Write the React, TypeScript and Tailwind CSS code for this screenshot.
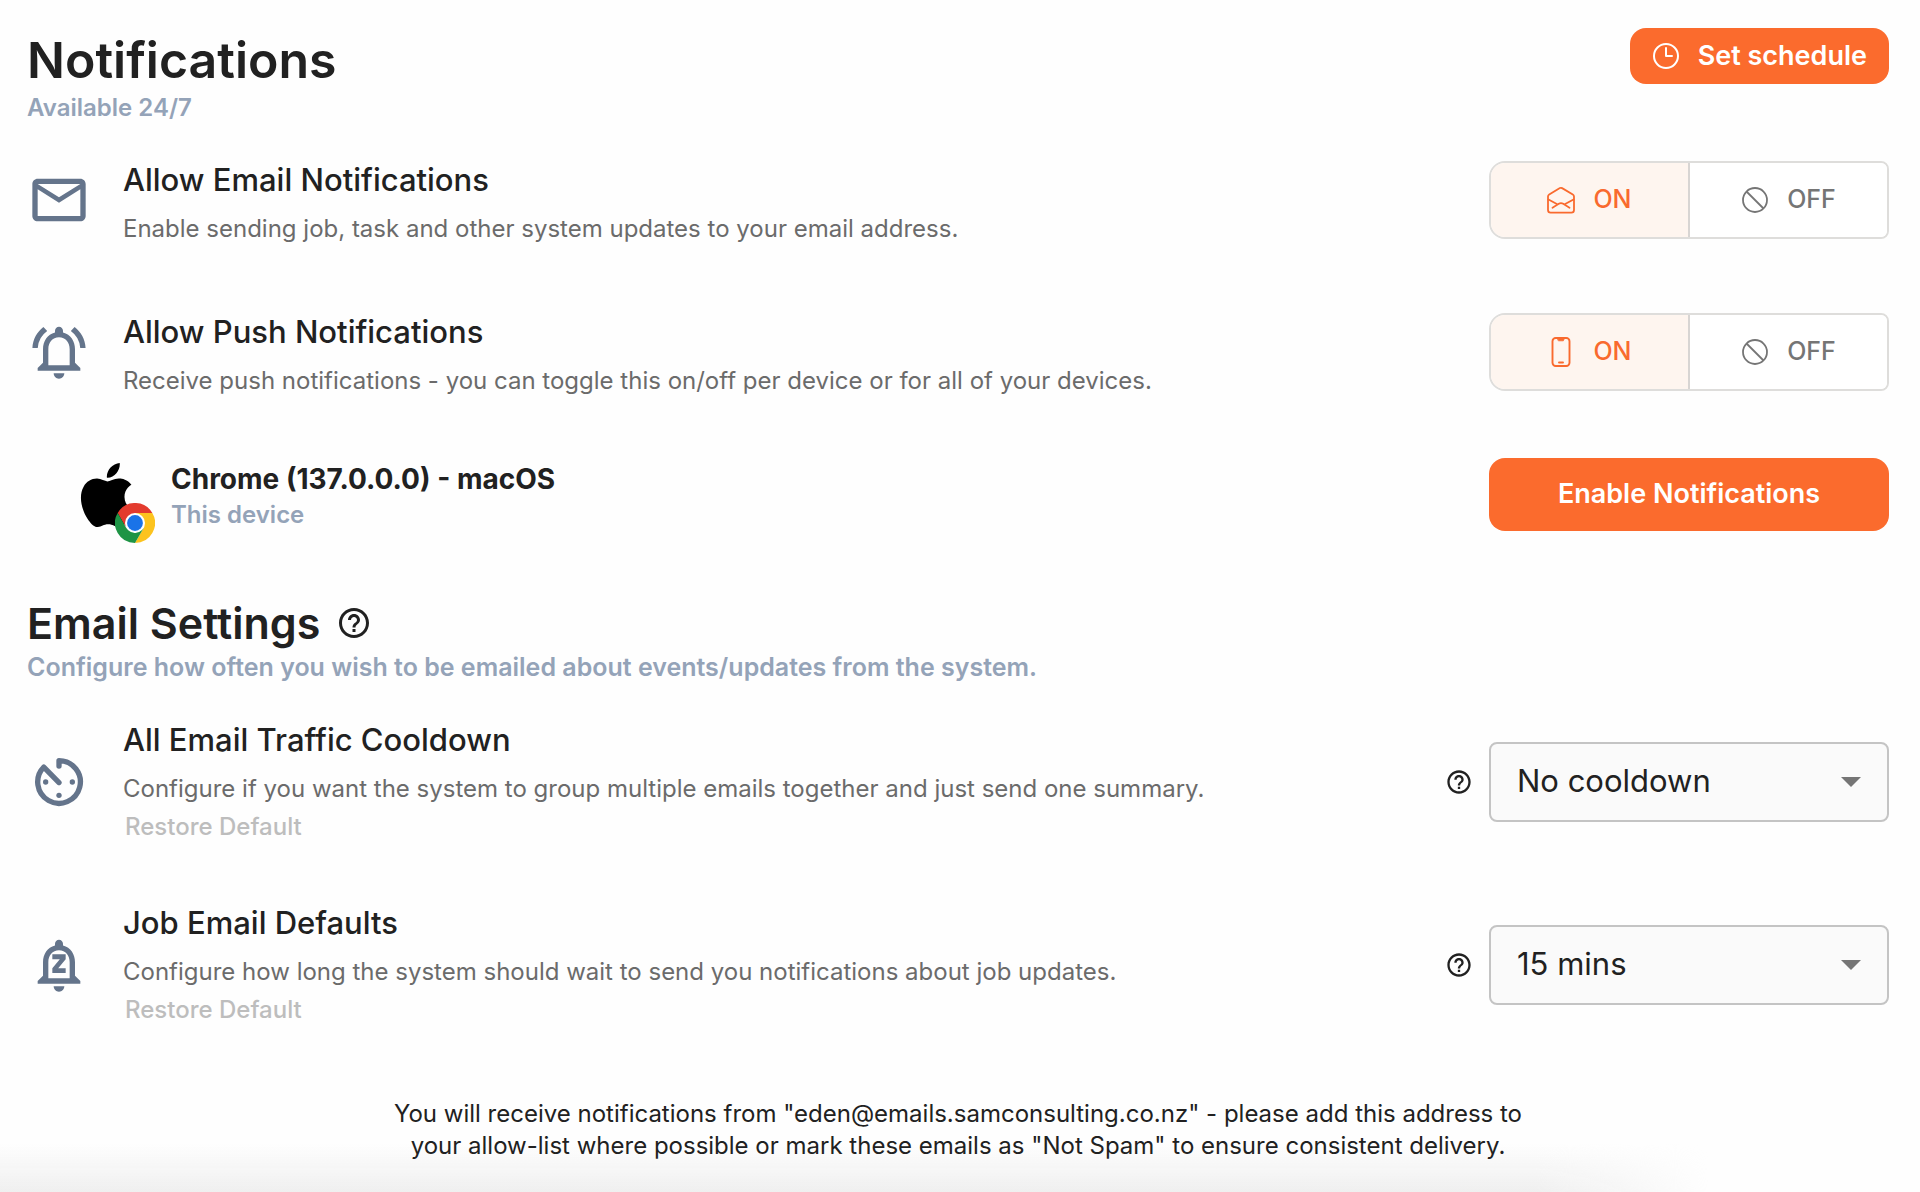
import { useState, type ReactNode } from "react";
import {
  MdHelpOutline,
  MdMailOutline,
  MdOutlineNotificationsActive,
  MdOutlineNotificationsPaused,
} from "react-icons/md";
import { SiApple } from "react-icons/si";

type IconProps = { className?: string };

function ClockIcon({ className }: IconProps) {
  return (
    <svg viewBox="0 0 28 28" fill="none" stroke="currentColor" strokeWidth="2" className={className} aria-hidden="true">
      <circle cx="14" cy="14" r="12" />
      <path d="M14 6v8h6" strokeLinecap="round" strokeLinejoin="round" />
    </svg>
  );
}

function TimerIcon() {
  return (
    <svg viewBox="0 0 24 24" fill="none" stroke="currentColor" strokeWidth="2" strokeLinecap="round" strokeLinejoin="round" aria-hidden="true">
      <path d="M12 6V4a8 8 0 1 1-5.700 2.400L12 12.200" />
      <g fill="currentColor" stroke="none">
        <circle cx="7" cy="12" r="1" />
        <circle cx="17" cy="12" r="1" />
        <circle cx="12" cy="17" r="1" />
      </g>
    </svg>
  );
}

function MailOpenIcon({ className }: IconProps) {
  return (
    <svg viewBox="0 0 28 28" fill="none" stroke="currentColor" strokeWidth="1.800" strokeLinecap="round" strokeLinejoin="round" className={className} aria-hidden="true">
      <path d="M1 10.600c0-1 .4-1.600 1.200-2.100L12.900 2.100c.7-.4 1.500-.4 2.200 0l10.700 6.400c.8.500 1.200 1.100 1.200 2.100V24a2.600 2.600 0 0 1-2.600 2.600H3.600A2.600 2.600 0 0 1 1 24z" />
      <path d="M1.500 13.500 10.300 18.300M26.500 13.500 17.700 18.300M5.500 21.700l6.300-3.900c1.300-.8 3.100-.8 4.400 0l6.300 3.900" />
    </svg>
  );
}

function PhoneIcon({ className }: IconProps) {
  return (
    <svg viewBox="0 0 28 32" fill="none" stroke="currentColor" strokeWidth="1.900" strokeLinecap="round" className={className} aria-hidden="true">
      <rect x="5.500" y="2" width="17" height="28" rx="3.200" />
      <path d="M10.500 2.400h7l-1.200 2.400h-4.600z" fill="currentColor" strokeWidth="0.800" />
      <path d="M12 26.500h4" />
    </svg>
  );
}

function BanIcon({ className }: IconProps) {
  return (
    <svg viewBox="0 0 28 28" fill="none" stroke="currentColor" strokeWidth="1.800" className={className} aria-hidden="true">
      <circle cx="14" cy="14" r="12" />
      <path d="M5.500 5.500l17 17" />
    </svg>
  );
}

function ChromeLogo({ className }: IconProps) {
  return (
    <svg viewBox="0 0 48 48" className={className} aria-hidden="true">
      <path d="M44.800 12A24 24 0 0 1 24 48l10.400-18L24 12z" fill="#fcc31e" />
      <path d="M3.200 12A24 24 0 0 1 44.800 12H24L13.600 30z" fill="#e33b2e" />
      <path d="M3.200 12 13.600 30 24 36l10.400-6L24 48A24 24 0 0 1 3.200 12z" fill="#1e9445" />
      <circle cx="24" cy="24" r="12" fill="#fff" />
      <circle cx="24" cy="24" r="9.500" fill="#1a73e8" />
    </svg>
  );
}

function Row({ icon, title, text, extra, control }: { icon: ReactNode; title: ReactNode; text: string; extra?: ReactNode; control: ReactNode }) {
  return (
    <div className="flex items-center gap-8">
      <div className="size-16 shrink-0 text-[#64748b] [&>svg]:size-16">{icon}</div>
      <div className="min-w-0 flex-1 pt-0.5">
        <div className="text-[31px] leading-[48px] font-medium">{title}</div>
        <p className="mt-[9px] text-2xl leading-8 text-[#6b6b6b]">{text}</p>
        {extra}
      </div>
      {control}
    </div>
  );
}

function Toggle({ label, onIcon }: { label: string; onIcon: ReactNode }) {
  const [on, setOn] = useState(true);
  const base = "flex flex-1 items-center justify-center gap-[18px] text-[25px] font-medium";
  const active = "bg-[#fef5ef] text-[#f96a2e]";
  const idle = "bg-white text-[#757575]";
  return (
    <div role="group" aria-label={label} className="flex h-[78px] w-[400px] shrink-0 overflow-hidden rounded-l-2xl rounded-r-lg border-2 border-[#dedddb]">
      <button type="button" aria-pressed={on} onClick={() => setOn(true)} className={`${base} border-r-2 border-[#d8d5d3] ${on ? active : idle}`}>
        {onIcon}
        ON
      </button>
      <button type="button" aria-pressed={!on} onClick={() => setOn(false)} className={`${base} ${on ? idle : active}`}>
        <BanIcon className="size-7" />
        OFF
      </button>
    </div>
  );
}

function SelectControl({ id, options }: { id: string; options: string[] }) {
  return (
    <div className="flex shrink-0 items-center gap-4">
      <button type="button" aria-label="Help">
        <MdHelpOutline className="size-7" />
      </button>
      <div className="relative w-[400px]">
        <select id={id} className="h-20 w-full appearance-none rounded-lg border-2 border-[#c4c4c4] bg-[#fafafa] pr-16 pl-[26px] text-[31px]">
          {options.map((option) => (
            <option key={option}>{option}</option>
          ))}
        </select>
        <svg viewBox="0 0 20 10" className="pointer-events-none absolute top-1/2 right-7 h-2.5 w-5 -translate-y-1/2 fill-[#757575]" aria-hidden="true">
          <path d="M0 0h20L10 10z" />
        </svg>
      </div>
    </div>
  );
}

function RestoreDefault() {
  return (
    <button type="button" disabled className="ml-0.5 block h-11 text-2xl font-medium text-[#bdbdbd]">
      Restore Default
    </button>
  );
}

export default function App() {
  return (
    <main className="relative min-h-screen bg-[#fefefe] pt-7 pr-[31px] pb-7 pl-[27px] font-[Inter,sans-serif] text-[#212121]">
      <div className="pointer-events-none absolute right-0 bottom-0 left-0 h-12 bg-linear-to-t from-[#efefef] to-transparent [mask-image:linear-gradient(to_right,black_80%,transparent_89%)]" />

      <div className="relative">
        <header className="flex items-start justify-between">
          <div className="pt-1">
            <h1 className="text-[50px] leading-[56px] font-semibold">Notifications</h1>
            <p className="mt-1 text-2xl leading-8 font-semibold text-[#94a3b8]">Available 24/7</p>
          </div>
          <button type="button" className="flex h-14 items-center gap-[18px] rounded-2xl bg-[#fb6b2d] px-[22px] text-[27px] font-semibold text-white">
            <ClockIcon className="size-7" />
            Set schedule
          </button>
        </header>

        <section className="mt-[30px] flex flex-col gap-[61px]">
          <Row
            icon={<MdMailOutline />}
            title={<h2>Allow Email Notifications</h2>}
            text="Enable sending job, task and other system updates to your email address."
            control={<Toggle label="Email notifications" onIcon={<MailOpenIcon className="size-7" />} />}
          />
          <Row
            icon={<MdOutlineNotificationsActive />}
            title={<h2>Allow Push Notifications</h2>}
            text="Receive push notifications - you can toggle this on/off per device or for all of your devices."
            control={<Toggle label="Push notifications" onIcon={<PhoneIcon className="h-8 w-7" />} />}
          />
          <div className="flex items-center pl-12">
            <div className="relative mr-8 h-16 w-16">
              <SiApple className="size-16 text-black" />
              <ChromeLogo className="absolute -right-4 -bottom-4 size-10" />
            </div>
            <div className="flex-1">
              <h3 className="text-[28px] leading-10 font-bold">Chrome (137.0.0.0) - macOS</h3>
              <p className="text-2xl leading-8 font-semibold text-[#94a3b8]">This device</p>
            </div>
            <button type="button" className="h-[73px] w-[400px] shrink-0 rounded-2xl bg-[#fb6b2d] text-[27px] font-semibold text-white">
              Enable Notifications
            </button>
          </div>
        </section>

        <section className="mt-[68px]">
          <div className="flex items-center gap-4">
            <h2 className="text-[43px] leading-[48px] font-semibold">Email Settings</h2>
            <button type="button" aria-label="About email settings">
              <MdHelpOutline className="size-9" />
            </button>
          </div>
          <p className="mt-1 text-[25px] leading-8 font-semibold text-[#94a3b8]">
            Configure how often you wish to be emailed about events/updates from the system.
          </p>
          <div className="mt-[31px] flex flex-col gap-12">
            <Row
              icon={<TimerIcon />}
              title={<label htmlFor="cooldown">All Email Traffic Cooldown</label>}
              text="Configure if you want the system to group multiple emails together and just send one summary."
              extra={<RestoreDefault />}
              control={<SelectControl id="cooldown" options={["No cooldown", "15 mins", "1 hour"]} />}
            />
            <Row
              icon={<MdOutlineNotificationsPaused />}
              title={<label htmlFor="job-delay">Job Email Defaults</label>}
              text="Configure how long the system should wait to send you notifications about job updates."
              extra={<RestoreDefault />}
              control={<SelectControl id="job-delay" options={["15 mins", "30 mins", "1 hour"]} />}
            />
          </div>
        </section>

        <p className="mx-auto mt-[66px] max-w-[1160px] text-center text-2xl leading-8">
          You will receive notifications from "eden@emails.samconsulting.co.nz" - please add this address to your
          allow-list where possible or mark these emails as "Not Spam" to ensure consistent delivery.
        </p>
      </div>
    </main>
  );
}
